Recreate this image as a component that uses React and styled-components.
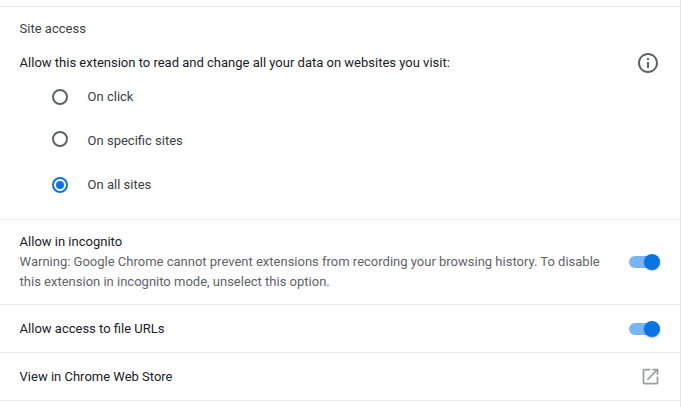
import * as React from "react";
import styled, { createGlobalStyle } from "styled-components";

const Global = createGlobalStyle`
  html, body {
    margin: 0;
    background: #fff;
    font-family: Roboto, "Liberation Sans", sans-serif;
  }
`;

const Card = styled.div`
  width: 681px;
  height: 407px;
  box-sizing: border-box;
  padding-top: 6px;
  border-right: 1px solid #e4e4e4;
  overflow: hidden;
`;

const Section = styled.div`
  border-top: 1px solid #e9eaeb;
  padding: 0 20px 0 19.6px;
  font-size: 13px;
  color: #202124;
`;

const SiteSection = styled(Section)`
  height: 213px;
  padding-top: 14px;
  box-sizing: border-box;
`;

const Heading = styled.div`
  line-height: 16px;
  color: #3c4043;
`;

const AccessRow = styled.div`
  display: flex;
  justify-content: space-between;
  align-items: center;
  margin-top: 13px;
  height: 26px;
  color: #202124;
`;

const AccessText = styled.span`
  padding-bottom: 2px;
`;

const RadioList = styled.div`
  display: grid;
  grid-auto-rows: 44px;
  padding-left: 32.4px;
  margin-top: -2px;
`;

const RadioRow = styled.label`
  display: flex;
  align-items: center;
  color: #3c4043;
`;

const Radio = styled.span`
  box-sizing: border-box;
  width: 16px;
  height: 16px;
  margin-right: 19.6px;
  border-radius: 50%;
  border: 2px solid ${(p) => (p.$on ? "#0a74e3" : "#5f6368")};
  display: flex;
  align-items: center;
  justify-content: center;
  transform: translateY(${(p) => p.$nudge}px);

  &::after {
    content: "";
    display: ${(p) => (p.$on ? "block" : "none")};
    width: 8px;
    height: 8px;
    border-radius: 50%;
    background: #0a74e3;
  }
`;

const Row = styled(Section)`
  display: flex;
  align-items: center;
  justify-content: space-between;
  height: ${(p) => p.$height}px;
  box-sizing: border-box;
`;

const Label = styled.div`
  line-height: 20px;
`;

const Warning = styled.div`
  width: 590px;
  line-height: 20px;
  color: #5f6368;
`;

const Toggle = styled.span`
  position: relative;
  display: block;
  flex: none;
  width: 31px;
  height: 12px;
  border-radius: 6px;
  background: #7ab5f3;

  &::after {
    content: "";
    position: absolute;
    right: 0;
    top: -2px;
    width: 16px;
    height: 16px;
    border-radius: 50%;
    background: #0a74e3;
    box-shadow: 0 1px 2px rgba(60, 64, 67, 0.35);
  }
`;

const Icon = styled.svg`
  display: block;
  flex: none;
`;

const StoreIcon = styled(Icon)`
  margin-right: -1px;
`;

const InfoIcon = () => (
  <Icon width="24" height="24" viewBox="0 0 24 24" fill="#5f6368">
    <path d="M11 7h2v2h-2zm0 4h2v6h-2zm1-9C6.48 2 2 6.48 2 12s4.48 10 10 10 10-4.48 10-10S17.52 2 12 2zm0 18c-4.41 0-8-3.59-8-8s3.59-8 8-8 8 3.59 8 8-3.59 8-8 8z" />
  </Icon>
);

const OpenIcon = () => (
  <StoreIcon width="21" height="21" viewBox="0 0 24 24" fill="#9a9da1">
    <path d="M19 19H5V5h7V3H5a2 2 0 0 0-2 2v14a2 2 0 0 0 2 2h14c1.1 0 2-.9 2-2v-7h-2v7zM14 3v2h3.59l-9.83 9.83 1.41 1.41L19 6.41V10h2V3h-7z" />
  </StoreIcon>
);

const options = [
  { label: "On click", nudge: 1 },
  { label: "On specific sites", nudge: -1 },
  { label: "On all sites", nudge: 1, on: true },
];

export default function App() {
  return (
    <>
      <Global />
      <Card>
        <SiteSection>
          <Heading>Site access</Heading>
          <AccessRow>
            <AccessText>Allow this extension to read and change all your data on websites you visit:</AccessText>
            <InfoIcon />
          </AccessRow>
          <RadioList>
            {options.map((o) => (
              <RadioRow key={o.label}>
                <Radio $on={o.on} $nudge={o.nudge} />
                {o.label}
              </RadioRow>
            ))}
          </RadioList>
        </SiteSection>
        <Row $height={85}>
          <div>
            <Label>Allow in incognito</Label>
            <Warning>
              Warning: Google Chrome cannot prevent extensions from recording your browsing history. To disable this extension in incognito mode, unselect this option.
            </Warning>
          </div>
          <Toggle />
        </Row>
        <Row $height={48}>
          <Label>Allow access to file URLs</Label>
          <Toggle />
        </Row>
        <Row $height={48}>
          <Label>View in Chrome Web Store</Label>
          <OpenIcon />
        </Row>
        <Section />
      </Card>
    </>
  );
}
